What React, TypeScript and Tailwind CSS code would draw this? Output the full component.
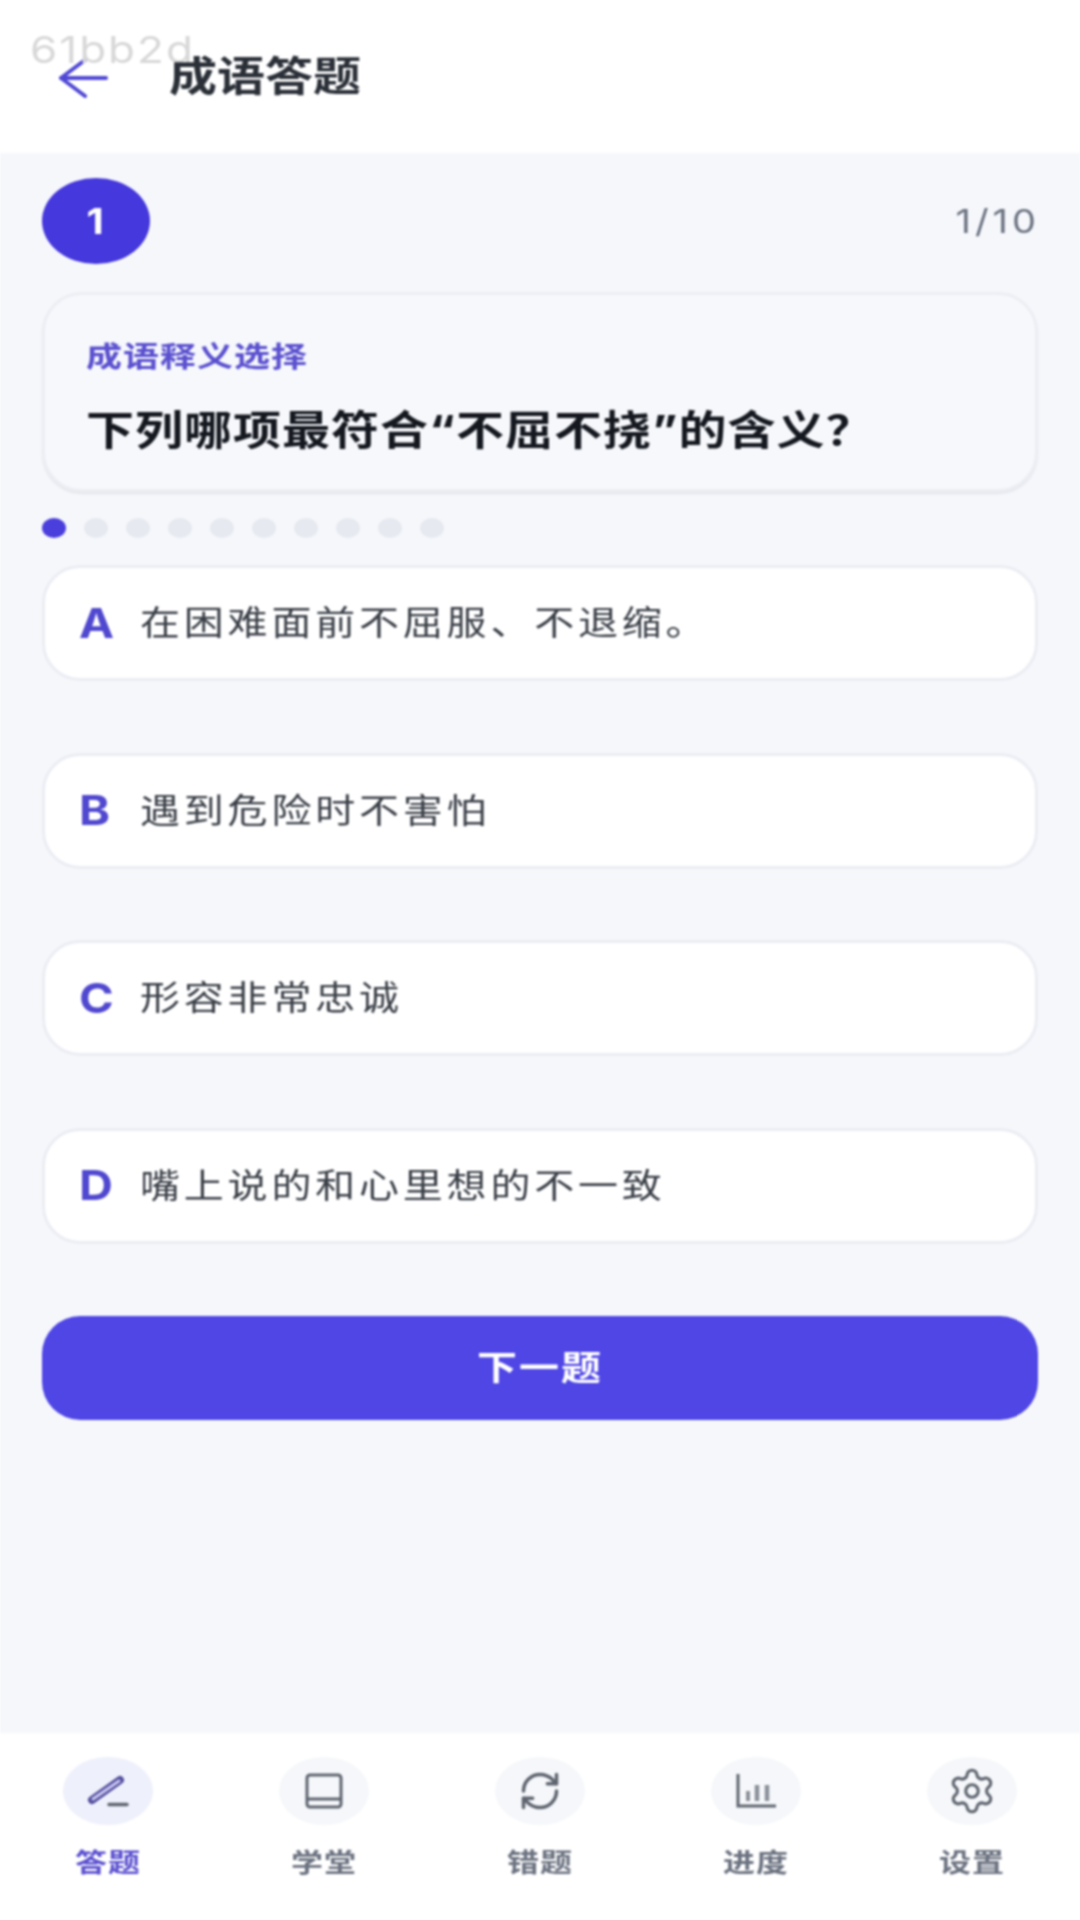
import React from 'react';
import { RefreshCw, Settings } from 'lucide-react';

const options = [
  { key: 'A', text: '在困难面前不屈服、不退缩。' },
  { key: 'B', text: '遇到危险时不害怕' },
  { key: 'C', text: '形容非常忠诚' },
  { key: 'D', text: '嘴上说的和心里想的不一致' },
];

const PenIcon = () => (
  <svg width="42" height="32" viewBox="0 0 42 32" fill="none" strokeLinecap="round">
    <path d="M5 25 L33 5" stroke="#56519f" strokeWidth="8" />
    <path d="M6 24 L32 6" stroke="#c9c6f2" strokeWidth="3" />
    <path d="M22 29.5 H40" stroke="#5f6570" strokeWidth="3.4" />
  </svg>
);

const BookIcon = () => (
  <svg width="38" height="36" viewBox="0 0 38 36" fill="none" stroke="currentColor" strokeWidth="3" strokeLinejoin="round">
    <rect x="2" y="2" width="34" height="32" rx="3" />
    <path d="M2 26 H36" />
  </svg>
);

const ChartIcon = () => (
  <svg width="40" height="34" viewBox="0 0 40 34" fill="none" stroke="currentColor">
    <path d="M2 0 V32 H40" strokeWidth="3" />
    <path d="M12 17 V27" strokeWidth="4" opacity="0.7" />
    <path d="M21 11 V27" strokeWidth="4.5" opacity="0.7" />
    <path d="M31 11 V27" strokeWidth="4.5" opacity="0.7" />
  </svg>
);

const tabs = [
  { label: '答题', icon: <PenIcon />, active: true },
  { label: '学堂', icon: <BookIcon /> },
  { label: '错题', icon: <RefreshCw className="w-[52px] h-[44px]" strokeWidth={1.9} /> },
  { label: '进度', icon: <ChartIcon /> },
  { label: '设置', icon: <Settings className="w-[58px] h-[50px]" strokeWidth={1.5} /> },
];

export default function App() {
  return (
    <div className="relative flex flex-col h-[1920px] w-[1080px] overflow-hidden bg-[#f5f7fb] font-['Inter','Noto_Sans_CJK_SC',sans-serif] blur-[1px]">
      {/* watermark */}
      <span className="absolute left-[30px] top-[20px] text-[44px] leading-[58px] tracking-[2px] text-[#d8d8d8] scale-y-[0.85] origin-left">61bb2d</span>

      {/* Header */}
      <header className="h-[153px] shrink-0 bg-white flex items-center pl-[58px]">
        <svg width="50" height="40" viewBox="0 0 50 40" fill="none" stroke="#5049d4" strokeWidth="4" strokeLinecap="round" strokeLinejoin="round" className="mt-[2px]">
          <path d="M48 20 H3" />
          <path d="M27 2 L3 20 L27 38" />
        </svg>
        <h1 className="ml-[61px] text-[48px] leading-none font-bold text-[#2b3038] scale-y-[0.85]">成语答题</h1>
      </header>

      {/* Main */}
      <main className="flex-1 px-[42px] pt-[25px]">
        <div className="flex items-center justify-between h-[86px]">
          <div className="w-[108px] h-[86px] rounded-[50%] bg-[#4538dc] flex items-center justify-center">
            <span className="text-[40px] font-bold text-white scale-y-[0.9] -ml-[2px]">1</span>
          </div>
          <span className="text-[38px] tracking-[4px] text-[#6b7280] scale-y-[0.85] origin-right -mr-[2px]">1/10</span>
        </div>

        <section className="mt-[28px] h-[200px] rounded-[40px] border-[3px] border-[#eceef3] bg-[#f6f8fc] shadow-[0_2px_2px_#e3e5ea] pl-[41px] pt-[41px]">
          <p className="text-[36px] leading-[42px] tracking-[1px] font-bold text-[#5b50cf] scale-y-[0.8] origin-left">成语释义选择</p>
          <p className="mt-[26px] text-[48px] leading-[54px] tracking-[1px] font-bold text-[#15181f] scale-y-[0.85] origin-left whitespace-nowrap">下列哪项最符合“不屈不挠”的含义？</p>
        </section>

        <div className="mt-[26px] flex gap-[18px]">
          {Array.from({ length: 10 }).map((_, i) => (
            <span key={i} className={`w-[24px] h-[20px] rounded-[50%] ${i === 0 ? 'bg-[#4a3fdd]' : 'bg-[#e6e9f0]'}`} />
          ))}
        </div>

        <div className="mt-[27px] flex flex-col gap-[71.5px]">
          {options.map((o) => (
            <div key={o.key} className="h-[116px] rounded-[38px] border-[3px] border-[#ebedf3] bg-white flex items-center pl-[34px]">
              <span className="w-[61px] shrink-0 text-[47px] font-bold text-[#5048cf] scale-y-[0.88] origin-left">{o.key}</span>
              <span className="text-[40px] tracking-[3.8px] text-[#3a3f47] scale-y-[0.85] whitespace-nowrap">{o.text}</span>
            </div>
          ))}
        </div>

        <button className="mt-[72px] w-full h-[104px] rounded-[38px] bg-[#4f46e5] text-white text-[40px] tracking-[2px] font-bold">
          <span className="inline-block scale-y-[0.85]">下一题</span>
        </button>
      </main>

      {/* Bottom nav */}
      <nav className="h-[187px] shrink-0 bg-white grid grid-cols-5 pt-[24px]">
        {tabs.map((t) => (
          <div key={t.label} className="flex flex-col items-center">
            <div className={`w-[90px] h-[68px] rounded-[50%] flex items-center justify-center ${t.active ? 'bg-[#eef0fb]' : 'bg-[#f5f7fa] text-[#5f6570]'}`}>
              {t.icon}
            </div>
            <span className={`mt-[20px] text-[32px] leading-[36px] tracking-[1px] font-bold scale-y-[0.8] ${t.active ? 'text-[#5b50cf]' : 'text-[#6b7280]'}`}>{t.label}</span>
          </div>
        ))}
      </nav>
    </div>
  );
}
